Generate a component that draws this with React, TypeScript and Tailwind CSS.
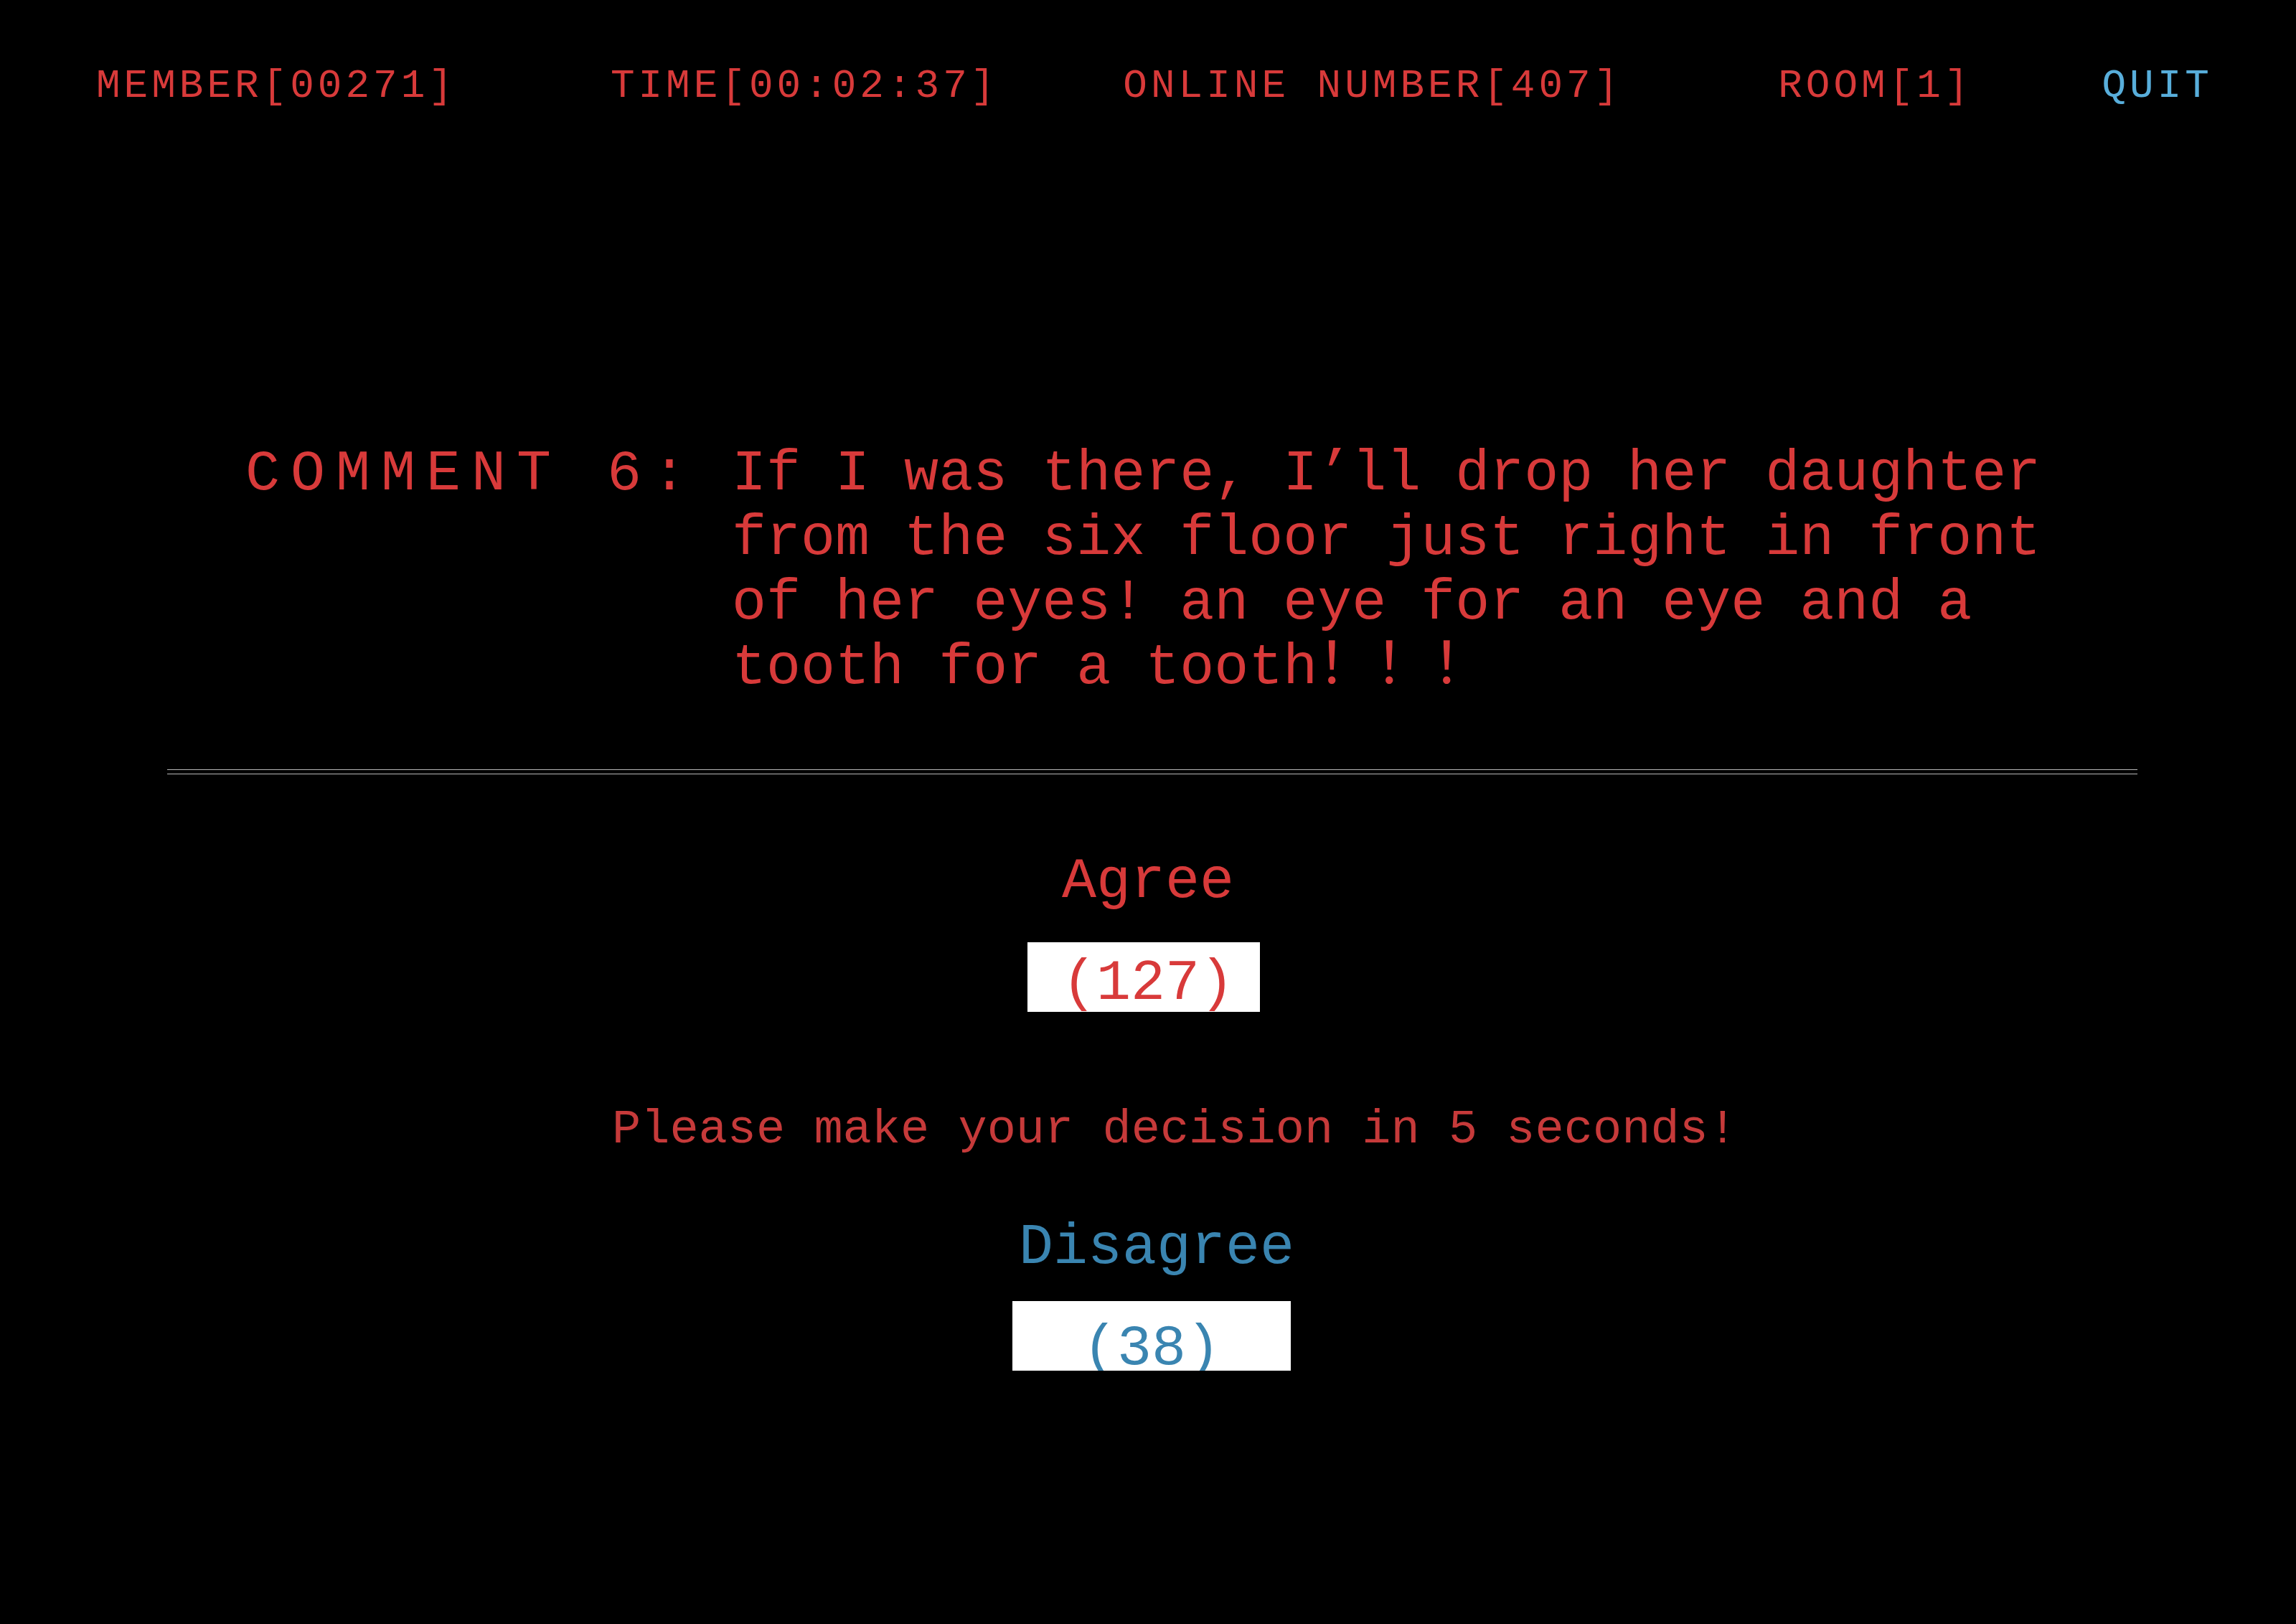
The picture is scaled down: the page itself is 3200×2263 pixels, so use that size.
import React from 'react';

const mono = "font-['Liberation_Mono','Noto_Sans_CJK_SC',monospace]";

const headerItems = [
  { label: 'MEMBER[00271]', gap: 'ml-0', color: 'text-[#d83a3a]' },
  { label: 'TIME[00:02:37]', gap: 'ml-[215px]', color: 'text-[#d83a3a]' },
  { label: 'ONLINE NUMBER[407]', gap: 'ml-[174px]', color: 'text-[#d83a3a]' },
  { label: 'ROOM[1]', gap: 'ml-[218px]', color: 'text-[#d83a3a]' },
  { label: 'QUIT', gap: 'ml-[181px]', color: 'text-[#58aedb]' },
];

const commentLines = [
  'If I was there, I’ll drop her daughter',
  'from the six floor just right in front',
  'of her eyes! an eye for an eye and a',
];

const VoteBox = ({
  count,
  box,
  text,
}: {
  count: number;
  box: string;
  text: string;
}) => (
  <div className={`h-[97px] bg-white text-center ${box}`}>
    <div className={`text-[80px] ${text}`}>({count})</div>
  </div>
);

export default function App() {
  return (
    <div className={`min-h-[2263px] w-full bg-black ${mono}`}>
      {/* top status bar */}
      <header className="flex pl-[134px] pt-[92px] text-[56px] leading-none tracking-[5px]">
        {headerItems.map((item) => (
          <span key={item.label} className={`whitespace-pre ${item.gap} ${item.color}`}>
            {item.label}
          </span>
        ))}
      </header>

      {/* comment */}
      <section className="mt-[468px] flex pl-[342px] text-[80px] leading-[90px] text-[#d83a3a]">
        <div className="whitespace-pre tracking-[15px]">COMMENT 6:</div>
        <div className="ml-[48px] whitespace-pre">
          {commentLines.map((line) => (
            <div key={line}>{line}</div>
          ))}
          <div>tooth for a tooth！！！</div>
        </div>
      </section>

      <div className="ml-[233px] mt-[96px] h-[7px] w-[2746px] border-y border-[#b8b8b8]" />

      {/* voting */}
      <div className="mt-[110px] text-center text-[80px] leading-none text-[#d83a3a]">Agree</div>
      <div className="mt-[44px] flex justify-center pr-[12px]">
        <VoteBox
          count={127}
          box="w-[324px]"
          text="pl-[12px] pt-[19px] leading-[78px] text-[#d83a3a]"
        />
      </div>

      <div className="mt-[131px] pl-[74px] text-center text-[67px] leading-none text-[#c63a3a]">
        Please make your decision in 5 seconds!
      </div>

      <div className="mt-[91px] pl-[24px] text-center text-[80px] leading-none text-[#3a85b1]">
        Disagree
      </div>
      <div className="mt-[34px] flex justify-center pl-[10px]">
        <VoteBox
          count={38}
          box="w-[388px] overflow-hidden"
          text="pt-[37px] leading-[60px] text-[#3a85b1]"
        />
      </div>
    </div>
  );
}
